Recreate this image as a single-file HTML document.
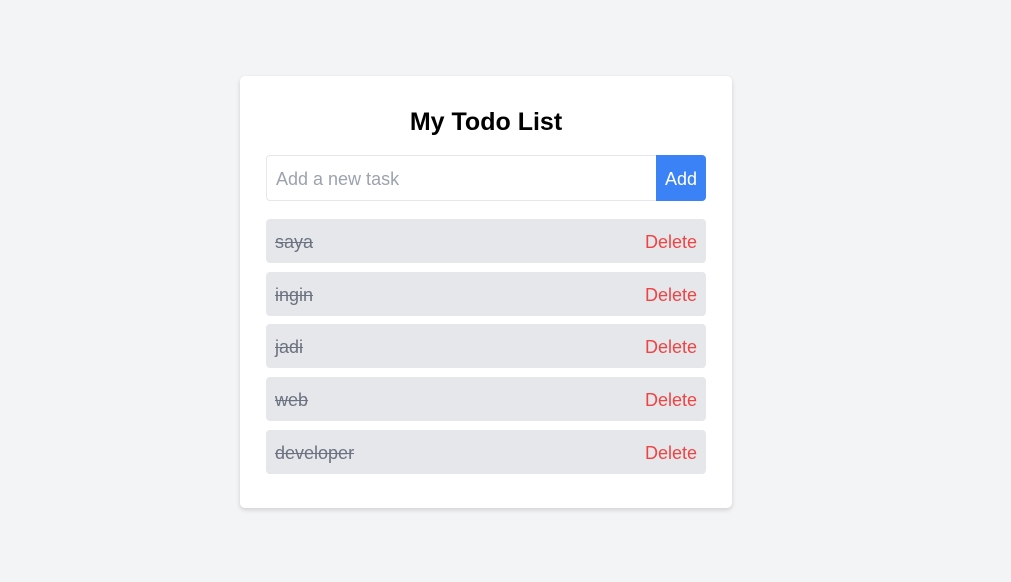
<!DOCTYPE html>
<html><head><style>
body{margin:0;background:#f3f4f6;font-family:"Liberation Sans",sans-serif;width:1011px;height:582px;position:relative}
.card{position:absolute;left:240px;top:76px;width:492px;height:432px;background:#fff;border-radius:5px;box-shadow:0 2px 5px rgba(0,0,0,.15);box-sizing:border-box;padding:0 26px}
h1{margin:0;position:absolute;left:0;right:0;top:31px;text-align:center;font-size:25px;font-weight:bold;line-height:30px;color:#000}
.row{position:absolute;left:26px;top:79px;width:440px;height:46px;display:flex}
.inp{flex:1;border:1px solid #e5e7eb;border-right:none;border-radius:4px 0 0 4px;font-size:18px;color:#9ca3af;line-height:46px;padding-left:9px}
.btn{width:50px;background:#3b82f6;color:#fff;font-size:18px;line-height:48px;text-align:center;border-radius:0 4px 4px 0}
.item{position:absolute;left:26px;width:440px;height:44px;background:#e5e7eb;border-radius:4px;display:flex;justify-content:space-between;align-items:center;padding:2px 9px 0;box-sizing:border-box;font-size:18px}
.item span:first-child{color:#6b7280;text-decoration:line-through}
.item span:last-child{color:#ef4444}
</style></head><body>
<div class="card">
<h1>My Todo List</h1>
<div class="row"><div class="inp">Add a new task</div><div class="btn">Add</div></div>
<div class="item" style="top:143px"><span>saya</span><span>Delete</span></div>
<div class="item" style="top:196px"><span>ingin</span><span>Delete</span></div>
<div class="item" style="top:248px"><span>jadi</span><span>Delete</span></div>
<div class="item" style="top:301px"><span>web</span><span>Delete</span></div>
<div class="item" style="top:354px"><span>developer</span><span>Delete</span></div>
</div>
</body></html>
